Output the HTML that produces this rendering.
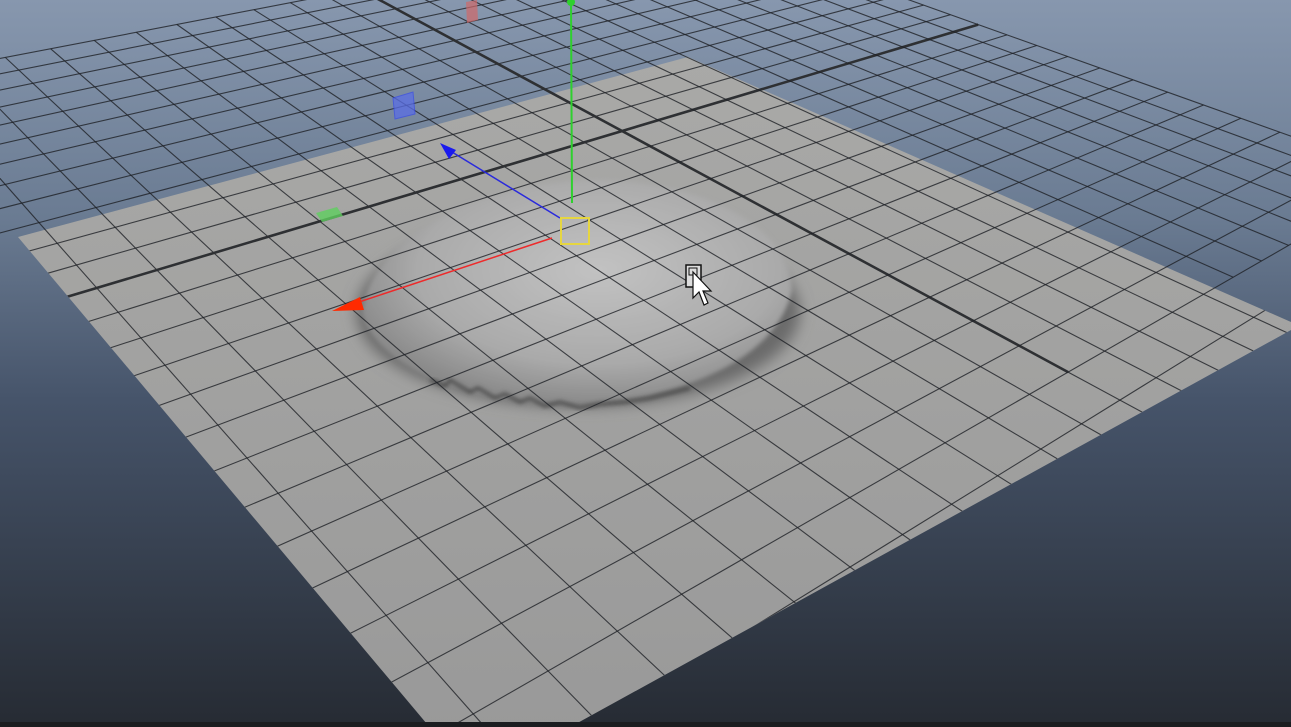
<!DOCTYPE html>
<html><head><meta charset="utf-8"><style>
html,body{margin:0;padding:0;background:#3a4655;overflow:hidden;width:1291px;height:727px}
svg{display:block}
</style></head><body>
<svg id="s" width="1291" height="727" viewBox="0 0 1291 727" xmlns="http://www.w3.org/2000/svg">
<defs>
<linearGradient id="bg" x1="0" y1="0" x2="0" y2="1">
<stop offset="0" stop-color="#8797ae"/>
<stop offset="0.3" stop-color="#6a7b92"/>
<stop offset="0.55" stop-color="#46546a"/>
<stop offset="1" stop-color="#262b33"/>
</linearGradient>
<linearGradient id="pl" x1="0" y1="0" x2="0" y2="1">
<stop offset="0" stop-color="#a9a9a7"/>
<stop offset="1" stop-color="#989898"/>
</linearGradient>
<radialGradient id="disc" cx="0.55" cy="0.4" r="0.6">
<stop offset="0" stop-color="#c2c2c2"/>
<stop offset="0.7" stop-color="#aaaaaa"/>
<stop offset="1" stop-color="#8a8a8a"/>
</radialGradient>
<filter id="bl" x="-20%" y="-20%" width="140%" height="140%"><feGaussianBlur stdDeviation="7"/></filter>
<filter id="bl2"><feGaussianBlur stdDeviation="2"/></filter>
<clipPath id="pc"><polygon points="18,237 688,57 1291,322 1291,330 474,780"/></clipPath>
<clipPath id="gc"><polygon points="0,0 1291,0 1291,330 474,780 18,237 0,240"/></clipPath>
</defs>
<rect width="1291" height="727" fill="url(#bg)"/>
<polygon points="18,237 688,57 1291,322 1291,330 474,780" fill="url(#pl)"/>
<g clip-path="url(#pc)">
<ellipse cx="578" cy="312" rx="222" ry="95" fill="#6a6a6a" filter="url(#bl)"/>
<path d="M362,312 C370,240 470,185 590,180 C700,180 790,225 792,290 C780,345 720,380 640,398 C600,405 540,408 480,395 C420,380 370,350 362,312 Z" fill="url(#disc)" filter="url(#bl2)"/>
<path d="M430,380 L445,386 L450,380 L470,392 L478,388 L495,398 L505,394 L520,402 L530,398 L545,406 L560,402 L580,408 L600,404 L625,402 L650,398 L690,388" stroke="#444" stroke-width="3" fill="none" filter="url(#bl2)"/>
</g>
<g id="grid" clip-path="url(#gc)"></g>
<line x1="571" y1="0" x2="572" y2="203" stroke="#2ed02e" stroke-width="2"/>
<circle cx="571" cy="2" r="4" fill="#2ed02e"/>
<line x1="560" y1="218" x2="452" y2="152" stroke="#2a2adc" stroke-width="1.5"/>
<polygon points="440,143 456,150 449,159" fill="#1a1aee"/>
<line x1="552" y1="238" x2="350" y2="305" stroke="#ee2a2a" stroke-width="1.5"/>
<polygon points="332,311 360,297 364,310" fill="#ff2a00"/>
<rect x="561" y="218" width="28" height="26" fill="none" stroke="#e6d640" stroke-width="2"/>
<polygon points="466,2 477,0 478,20 467,23" fill="#d06a6a" opacity="0.7"/>
<polygon points="393,98 413,92 415,114 395,119" fill="#5a6ee6" opacity="0.75" stroke="#3a4ee8"/>
<polygon points="316,213 337,207 343,216 322,222" fill="#5fcf5f" opacity="0.8"/>
<rect x="686" y="265" width="15" height="22" fill="#ddd" stroke="#111" stroke-width="1.5"/>
<rect x="689" y="268" width="8" height="7" fill="none" stroke="#111"/>
<path d="M693,272 L693,298 L699,292 L704,305 L708,303 L703,291 L711,291 Z" fill="#fff" stroke="#111" stroke-width="1.2"/>
<rect x="0" y="722" width="1291" height="5" fill="#1b1d20"/>
</svg>
<script>
(function(){
var a=0.0205,b=-0.02165;
function P(x,z){var d=a*x+b*z+1;return [(a*x*2426+b*z*(-649)+622)/d,(a*x*(-408)+b*z*(-556)+131)/d];}
var g=document.getElementById('grid'),h='';
function L(p,q,w,c,clip){h+='<line x1="'+p[0].toFixed(1)+'" y1="'+p[1].toFixed(1)+'" x2="'+q[0].toFixed(1)+'" y2="'+q[1].toFixed(1)+'" stroke="'+c+'" stroke-width="'+w+'"'+(clip?' clip-path="url(#pc)"':'')+'/>';}
var c='rgba(30,32,38,0.8)';
for(var i=-12;i<=12;i++){
 var maj=(i==0);
 L(P(i,-12),P(i,12),maj?2.6:1.1,maj?'#2e3033':c,false);
 L(P(-12,i),P(12,i),maj?2.6:1.1,maj?'#2e3033':c,false);
 L(P(i,12),P(i,20),1.1,c,true);
}
for(var z=13;z<=20;z++)L(P(-12,z),P(12,z),1.1,c,true);
g.innerHTML=h;
})();
</script>
</body></html>
